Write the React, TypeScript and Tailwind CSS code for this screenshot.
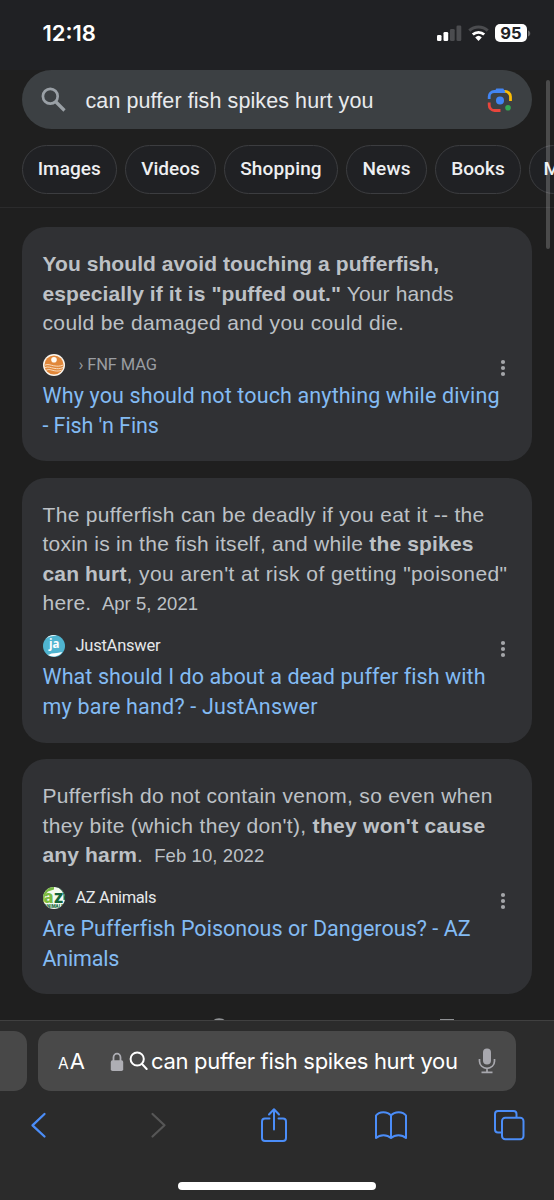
import type { ReactNode } from "react";

type Line = { key: string; cls: string; body: ReactNode };

function Dots() {
  return (
    <svg width="6" height="18" viewBox="0 0 6 18" fill="#a4a6a9">
      <circle cx="3" cy="3" r="2.1" />
      <circle cx="3" cy="9" r="2.1" />
      <circle cx="3" cy="15" r="2.1" />
    </svg>
  );
}

function FinsLogo() {
  return (
    <svg width="22" height="22" viewBox="0 0 22 22">
      <circle cx="11" cy="11" r="11" fill="#fbf6ee" />
      <circle cx="11" cy="11" r="9.6" fill="#e1873a" />
      <circle cx="11" cy="5.8" r="2.8" fill="#fffaf2" />
      <g fill="none" stroke="#fbe3c8" strokeWidth="0.9">
        <path d="M1.8 11.2c3-1.6 5.500 0 9 .6s6 .7 9.400-.8" />
        <path d="M2 13.700c3-1.600 5.500 0 9 .6s6 .7 9-.8" />
        <path d="M3.200 16.200c3-1.600 5 0 8 .5s5 .5 7.400-.6" />
      </g>
    </svg>
  );
}

function JustAnswerLogo() {
  return (
    <svg width="22" height="22" viewBox="0 0 22 22">
      <circle cx="11" cy="11" r="11" fill="#4fb4d0" />
      <path d="M4 19.400c1.500.5 3 .2 4.500-.8 3.500-.2 7.500-.8 10.800-1.500A11 11 0 0 1 4 19.400z" fill="#fff" />
      <path d="M2.500 4A11 11 0 0 1 14 .4C9.500.8 5.500 1.600 2.500 4z" fill="#d8eff6" />
      <text x="11.200" y="13" textAnchor="middle" fontFamily="Open Sans, sans-serif" fontWeight="700" fontSize="11.5" fill="#fff">ja</text>
    </svg>
  );
}

function AzLogo() {
  return (
    <svg width="22" height="22" viewBox="0 0 22 22">
      <defs>
        <clipPath id="az"><circle cx="11" cy="11" r="11" /></clipPath>
      </defs>
      <g clipPath="url(#az)">
        <rect width="22" height="22" fill="#f4faf0" />
        <path d="M0 0h11v2.500L5 4.500 2 8l-1 8H0z" fill="#76b843" />
        <path d="M13 0c4 1 7 4 7.500 8v5H22V0z" fill="#17683a" />
        <text x="0.800" y="15.800" fontFamily="Roboto, sans-serif" fontWeight="900" fontSize="18" fill="#79bb3f">a</text>
        <text x="11" y="15.800" fontFamily="Roboto, sans-serif" fontWeight="900" fontSize="18" fill="#14653a">z</text>
        <text x="11" y="21" textAnchor="middle" fontFamily="Roboto, sans-serif" fontWeight="900" fontSize="4.500" fill="#1d6b40">ANIMALS</text>
      </g>
    </svg>
  );
}

const chips = [
  { label: "Images", cls: "w-[95.500px] tracking-[0.05px]" },
  { label: "Videos", cls: "w-[91px] tracking-[0px]" },
  { label: "Shopping", cls: "w-[114px] tracking-[0.15px]" },
  { label: "News", cls: "w-[81px] tracking-[0.15px]" },
  { label: "Books", cls: "w-[86px] tracking-[0.1px]" },
];

const results: { id: string; card: string; text: Line[]; logo: ReactNode; source: ReactNode; links: Line[] }[] = [
  {
    id: "fins",
    card: "h-[234px]",
    text: [
      { key: "a", cls: "font-bold tracking-[0.07px]", body: "You should avoid touching a pufferfish," },
      { key: "b", cls: "tracking-[0.15px]", body: <><b className="tracking-[0.1px]">especially if it is "puffed out."</b> Your hands</> },
      { key: "c", cls: "tracking-[0.36px]", body: "could be damaged and you could die." },
    ],
    logo: <FinsLogo />,
    source: <span className="ml-[3px] text-[#9a9da1] tracking-[-0.15px]">› FNF MAG</span>,
    links: [
      { key: "a", cls: "tracking-[0.14px]", body: "Why you should not touch anything while diving" },
      { key: "b", cls: "tracking-[-0.08px]", body: "- Fish 'n Fins" },
    ],
  },
  {
    id: "justanswer",
    card: "h-[265px]",
    text: [
      { key: "a", cls: "tracking-[0.31px]", body: "The pufferfish can be deadly if you eat it -- the" },
      { key: "b", cls: "tracking-[0.27px]", body: <>toxin is in the fish itself, and while <b className="tracking-[0.15px]">the spikes</b></> },
      { key: "c", cls: "tracking-[0.42px]", body: <><b className="tracking-[0.15px]">can hurt</b>, you aren't at risk of getting "poisoned"</> },
      { key: "d", cls: "tracking-[0.2px]", body: <>here.<span className="ml-[10.500px] text-[18.500px] tracking-[0.05px]">Apr 5, 2021</span></> },
    ],
    logo: <JustAnswerLogo />,
    source: <span className="text-[#e6e8ea] tracking-[-0.25px]">JustAnswer</span>,
    links: [
      { key: "a", cls: "tracking-[0.08px]", body: "What should I do about a dead puffer fish with" },
      { key: "b", cls: "tracking-[0.2px]", body: "my bare hand? - JustAnswer" },
    ],
  },
  {
    id: "az",
    card: "h-[235px]",
    text: [
      { key: "a", cls: "tracking-[0.31px]", body: "Pufferfish do not contain venom, so even when" },
      { key: "b", cls: "tracking-[0.31px]", body: <>they bite (which they don't), <b className="tracking-[0.28px]">they won't cause</b></> },
      { key: "c", cls: "tracking-[0.2px]", body: <><b className="tracking-[0.15px]">any harm</b>.<span className="ml-[11px] text-[18.500px] tracking-[0.1px]">Feb 10, 2022</span></> },
    ],
    logo: <AzLogo />,
    source: <span className="text-[#e6e8ea] tracking-[-0.4px]">AZ Animals</span>,
    links: [
      { key: "a", cls: "tracking-[0.04px]", body: "Are Pufferfish Poisonous or Dangerous? - AZ" },
      { key: "b", cls: "tracking-[-0.2px]", body: "Animals" },
    ],
  },
];

function StatusBar() {
  return (
    <div className="flex h-[70px] items-start justify-between bg-[#202124] pl-[42.500px] pr-[23px] pt-[20px]">
      <span className="font-['Inter',sans-serif] text-[22px] leading-[27px] font-semibold text-white">12:18</span>
      <div className="flex pt-[4px]">
        <svg width="54" height="18" viewBox="0 0 54 18">
          <rect x="1" y="11" width="4.500" height="6" rx="1.300" fill="#fff" />
          <rect x="7.500" y="8" width="4.700" height="9" rx="1.300" fill="#fff" />
          <rect x="14" y="5" width="4.700" height="12" rx="1.300" fill="#4b4c4f" />
          <rect x="20.500" y="1.500" width="4.800" height="15.500" rx="1.300" fill="#4b4c4f" />
          <g fill="none">
            <path d="M33.300 6.600a13.500 13.500 0 0 1 18.400 0" stroke="#4b4c4f" strokeWidth="3" />
            <path d="M36.800 10.600a8.200 8.200 0 0 1 11.400 0" stroke="#fff" strokeWidth="2.800" />
          </g>
          <path d="M39.200 13.400a4.800 4.800 0 0 1 6.600 0L42.500 17z" fill="#fff" />
        </svg>
        <div className="ml-[5px] flex h-[18px] w-[32px] items-center justify-center rounded-[5px] bg-white font-['Inter',sans-serif] text-[16.500px] font-bold text-[#202124]">95</div>
        <svg className="ml-[1px] mt-[6px]" width="3" height="7" viewBox="0 0 3 7"><path d="M0 .500c3 1 3 5 0 6z" fill="#68696b" /></svg>
      </div>
    </div>
  );
}

function LensIcon() {
  return (
    <svg width="26" height="26" viewBox="0 0 26 26">
      <g fill="none" strokeWidth="2.800">
        <path d="M2.200 12V9.500A5 5 0 0 1 7.200 4.500H18" stroke="#4285f4" />
        <path d="M17.500 4.500A5.300 5.300 0 0 1 23.500 10v4" stroke="#fbbc04" />
        <path d="M2.200 15.500v2.500a5.300 5.300 0 0 0 5.300 5.500H13.500" stroke="#e8453c" />
      </g>
      <path d="M7 5.500L9.300 1.500h7L18.500 5.500z" fill="#4285f4" />
      <circle cx="13" cy="13.500" r="4" fill="#4285f4" />
      <circle cx="21" cy="20.800" r="2.800" fill="#34a853" />
    </svg>
  );
}

export default function App() {
  return (
    <div className="relative flex h-[1200px] w-[554px] flex-col overflow-hidden bg-[#1f1f1f] font-['Liberation_Sans',Arial,sans-serif]">
      <StatusBar />
      <div className="ml-[21.500px] mr-[22px] flex h-[59px] items-center rounded-full bg-[#3c4043] pl-[19px] pr-[19px]">
        <svg width="26" height="26" viewBox="0 0 26 26" fill="none" stroke="#9aa0a6" strokeWidth="2.700">
          <circle cx="9.300" cy="9.300" r="7.400" />
          <path d="M14.500 14.500l9 9" strokeWidth="3.200" />
        </svg>
        <span className="ml-[19px] mt-[2px] flex-1 whitespace-nowrap text-[21.500px] leading-[30px] tracking-[0.09px] text-[#e8eaed]">can puffer fish spikes hurt you</span>
        <LensIcon />
      </div>

      <div className="flex h-[79px] shrink-0 gap-[8px] overflow-hidden border-b border-[#2b2b2c] pl-[21.500px] pt-[16px]">
        {chips.map((c) => (
          <div key={c.label} className="shrink-0">
            <div className={`${c.cls} flex h-[49px] items-center justify-center rounded-full border-[1.500px] border-[#3c3d40] bg-[#202124] font-['Roboto',sans-serif] text-[19px] font-medium text-[#eeeff1]`}>{c.label}</div>
          </div>
        ))}
        <div className="-ml-[0.500px] flex h-[49px] w-[80px] shrink-0 items-center rounded-full border border-[#3c3d40] bg-[#202124] pl-[14px] font-['Roboto',sans-serif] text-[19px] font-medium text-[#eeeff1]">Maps</div>
      </div>

      <div className="flex flex-col gap-[16.500px] pl-[21.500px] pr-[22px] pt-[19px]">
        {results.map((r) => (
          <article key={r.id} className={`${r.card} rounded-[24px] bg-[#303134] px-[21px] pt-[22px]`}>
            <div className="text-[21px] leading-[29.500px] text-[#bdc1c6]">
              {r.text.map((l) => (
                <div key={l.key} className={`${l.cls} whitespace-nowrap`}>{l.body}</div>
              ))}
            </div>
            <div className="mb-[1.500px] mt-[13px] flex h-[29px] items-center">
              {r.logo}
              <div className="ml-[11px] flex-1 whitespace-nowrap font-['Roboto',sans-serif] text-[16.500px] leading-[22px]">{r.source}</div>
              <div className="mr-[5px] mt-[5px]"><Dots /></div>
            </div>
            <div className="font-['Roboto',sans-serif] text-[21.500px] leading-[29.500px] text-[#83bbf3]">
              {r.links.map((l) => (
                <div key={l.key} className={`${l.cls} whitespace-nowrap`}>{l.body}</div>
              ))}
            </div>
          </article>
        ))}
      </div>

      <div className="absolute left-[546px] top-[80px] h-[169px] w-[4px] rounded-full bg-[#ffffff33]" />
      <svg className="absolute left-0 top-[1016px]" width="554" height="5" viewBox="0 0 554 5" fill="#8f9194">
        <path d="M213.500 4.500c2-3 9-3 11.500 0z" />
        <rect x="440" y="3" width="14" height="1.500" />
      </svg>

      <footer className="absolute inset-x-0 bottom-0 flex h-[180px] flex-col border-t border-[#404040] bg-[#2b2b2b]">
        <div className="mt-[10px] flex h-[60px]">
          <div className="h-[60px] w-[27px] rounded-r-[13px] bg-[#484848]" />
          <div className="ml-[11px] flex h-[60px] w-[478px] items-center rounded-[13px] bg-[#494949] pl-[20px] text-white">
            <div className="mt-[3px] flex w-[52px] items-baseline gap-[1px] font-['Inter',sans-serif] leading-[26px]">
              <span className="text-[15.500px]">A</span>
              <span className="text-[22px]">A</span>
            </div>
            <svg className="mt-[1px]" width="14" height="20" viewBox="0 0 14 20">
              <path d="M3.500 9V5.500a3.500 3.900 0 0 1 7 0V9" fill="none" stroke="#aeaeb4" strokeWidth="1.800" />
              <rect x="0.800" y="8.200" width="12.400" height="10.800" rx="1.700" fill="#aeaeb4" />
            </svg>
            <svg className="ml-[5px]" width="20" height="22" viewBox="0 0 20 22" fill="none" stroke="#fff" strokeWidth="2" strokeLinecap="round">
              <circle cx="8.200" cy="9" r="6.600" />
              <path d="M13 14l4.700 5" />
            </svg>
            <span className="ml-[2px] w-[327px] whitespace-nowrap font-['Inter',sans-serif] text-[22px] leading-[28px] tracking-[-0.3px]">can puffer fish spikes hurt you</span>
            <svg width="18" height="26" viewBox="0 0 18 26" fill="none" stroke="#a8a8ae" strokeWidth="1.700">
              <rect x="5" y="0.500" width="8" height="16" rx="4" fill="#a8a8ae" stroke="none" />
              <path d="M1.500 11v2.300a7.500 7 0 0 0 15 0V11M9 20.500v4M3.500 24.300h11" />
            </svg>
          </div>
        </div>
        <nav className="-mt-[1px] flex h-[70px] items-center text-[#4b8df8]">
          <svg className="ml-[28px]" width="20" height="28" viewBox="0 0 20 28" fill="none" stroke="currentColor" strokeWidth="2.300" strokeLinecap="round" strokeLinejoin="round"><path d="M16.500 3L4.500 14.300l12 11.200" /></svg>
          <svg className="ml-[101px]" width="20" height="28" viewBox="0 0 20 28" fill="none" stroke="#565656" strokeWidth="2.200" strokeLinecap="round" strokeLinejoin="round"><path d="M3.500 3l12 11.300-12 11.200" /></svg>
          <svg className="ml-[91px]" width="28" height="36" viewBox="0 0 28 36" fill="none" stroke="currentColor" strokeWidth="2" strokeLinecap="round" strokeLinejoin="round">
            <path d="M9.500 11.500H5a3 3 0 0 0-3 3V31a3 3 0 0 0 3 3h18a3 3 0 0 0 3-3V14.500a3 3 0 0 0-3-3h-4.500M14 22.500V2.500M9 7.500l5-5.200 5 5.200" />
          </svg>
          <svg className="ml-[86px]" width="34" height="30" viewBox="0 0 34 30" fill="none" stroke="currentColor" strokeWidth="2" strokeLinejoin="round">
            <path d="M17 5.500C13.500 1 5 1 2 5.500V28c4-3.800 11-3.800 15 0 4-3.800 11-3.800 15 0V5.500C29 1 20.500 1 17 5.500zM17 5.500V28" />
          </svg>
          <svg className="ml-[85px]" width="32" height="32" viewBox="0 0 32 32" fill="none" stroke="currentColor" strokeWidth="2">
            <rect x="9" y="8.800" width="21.500" height="21.500" rx="3.300" />
            <path d="M8.500 23.500H5a3 3 0 0 1-3-3V5a3 3 0 0 1 3-3h15.500a3 3 0 0 1 3 3v3.500" />
          </svg>
        </nav>
        <div className="mx-auto mt-[22px] h-[8px] w-[198px] rounded-full bg-white" />
      </footer>
    </div>
  );
}
